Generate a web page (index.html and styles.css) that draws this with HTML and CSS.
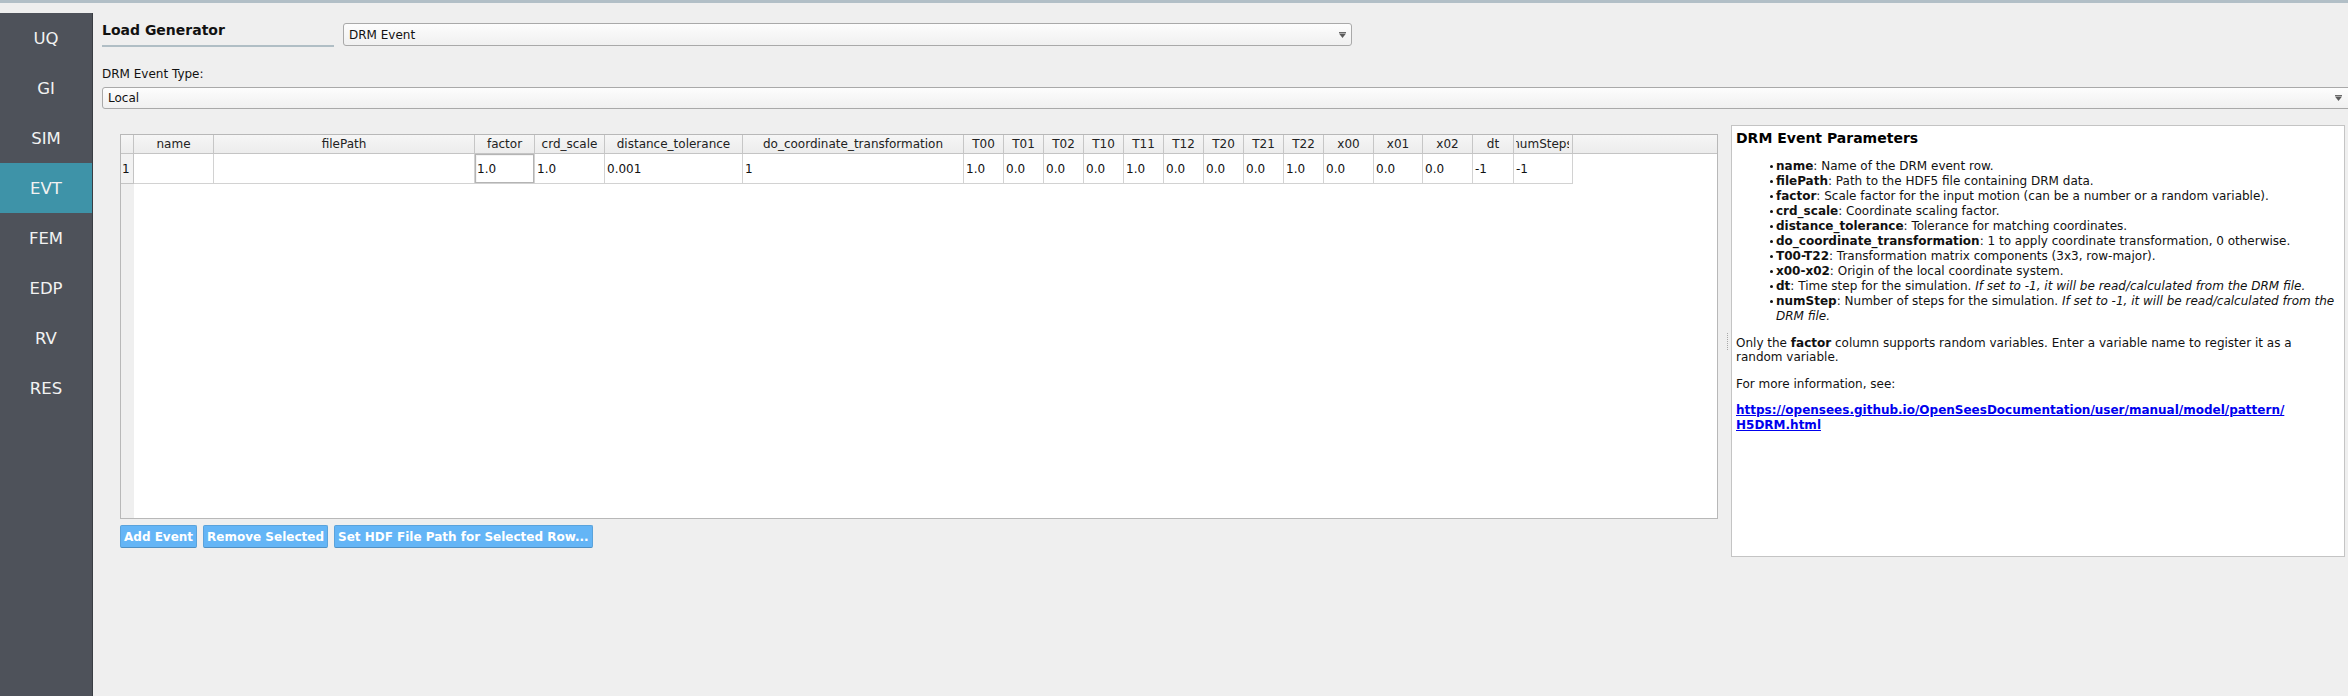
FILE: index.html
```html
<!DOCTYPE html>
<html>
<head>
<meta charset="utf-8">
<link rel="stylesheet" href="styles.css">
</head>
<body>
<div class="topline"></div>
<div class="app">
  <nav class="sidebar">
    <div class="nav-item">UQ</div>
    <div class="nav-item">GI</div>
    <div class="nav-item">SIM</div>
    <div class="nav-item active">EVT</div>
    <div class="nav-item">FEM</div>
    <div class="nav-item">EDP</div>
    <div class="nav-item">RV</div>
    <div class="nav-item">RES</div>
  </nav>
  <main class="main">
    <div class="header-row">
      <div class="title">Load Generator</div>
      <div class="combo combo-type"><span>DRM Event</span><svg class="arrow" width="7" height="6" viewBox="0 0 7 6"><rect x="0" y="0" width="7" height="1" fill="#6a6a6a"/><polygon points="0,1.5 7,1.5 3.5,6" fill="#5a5a5a"/></svg></div>
    </div>
    <div class="label">DRM Event Type:</div>
    <div class="combo combo-local"><span>Local</span><svg class="arrow" width="7" height="6" viewBox="0 0 7 6"><rect x="0" y="0" width="7" height="1" fill="#6a6a6a"/><polygon points="0,1.5 7,1.5 3.5,6" fill="#5a5a5a"/></svg></div>
    <div class="content">
      <div class="left">
        <div class="table-frame">
          <div class="vhead">
            <div class="corner"></div>
            <div class="rownum">1</div>
          </div>
          <div class="grid">
            <div class="hc">name</div>
            <div class="hc">filePath</div>
            <div class="hc">factor</div>
            <div class="hc">crd_scale</div>
            <div class="hc">distance_tolerance</div>
            <div class="hc">do_coordinate_transformation</div>
            <div class="hc">T00</div>
            <div class="hc">T01</div>
            <div class="hc">T02</div>
            <div class="hc">T10</div>
            <div class="hc">T11</div>
            <div class="hc">T12</div>
            <div class="hc">T20</div>
            <div class="hc">T21</div>
            <div class="hc">T22</div>
            <div class="hc">x00</div>
            <div class="hc">x01</div>
            <div class="hc">x02</div>
            <div class="hc">dt</div>
            <div class="hc padded"><span class="clip">numSteps</span></div>
            <div class="hc fill"></div>

            <div class="dc"></div>
            <div class="dc"></div>
            <div class="dc editor">1.0</div>
            <div class="dc">1.0</div>
            <div class="dc">0.001</div>
            <div class="dc">1</div>
            <div class="dc">1.0</div>
            <div class="dc">0.0</div>
            <div class="dc">0.0</div>
            <div class="dc">0.0</div>
            <div class="dc">1.0</div>
            <div class="dc">0.0</div>
            <div class="dc">0.0</div>
            <div class="dc">0.0</div>
            <div class="dc">1.0</div>
            <div class="dc">0.0</div>
            <div class="dc">0.0</div>
            <div class="dc">0.0</div>
            <div class="dc">-1</div>
            <div class="dc">-1</div>
            <div class="dc fill"></div>
          </div>
        </div>
        <div class="buttons">
          <button class="btn">Add Event</button>
          <button class="btn">Remove Selected</button>
          <button class="btn">Set HDF File Path for Selected Row...</button>
        </div>
      </div>
      <div class="splitter"><span class="grip"></span></div>
      <div class="info">
        <h3 class="info-title">DRM Event Parameters</h3>
        <ul class="info-list">
          <li><b>name</b>: Name of the DRM event row.</li>
          <li><b>filePath</b>: Path to the HDF5 file containing DRM data.</li>
          <li><b>factor</b>: Scale factor for the input motion (can be a number or a random variable).</li>
          <li><b>crd_scale</b>: Coordinate scaling factor.</li>
          <li><b>distance_tolerance</b>: Tolerance for matching coordinates.</li>
          <li><b>do_coordinate_transformation</b>: 1 to apply coordinate transformation, 0 otherwise.</li>
          <li><b>T00-T22</b>: Transformation matrix components (3x3, row-major).</li>
          <li><b>x00-x02</b>: Origin of the local coordinate system.</li>
          <li><b>dt</b>: Time step for the simulation. <i>If set to -1, it will be read/calculated from the DRM file.</i></li>
          <li><b>numStep</b>: Number of steps for the simulation. <i>If set to -1, it will be read/calculated from the DRM file.</i></li>
        </ul>
        <p class="info-p">Only the <b>factor</b> column supports random variables. Enter a variable name to register it as a random variable.</p>
        <p class="info-p more">For more information, see:</p>
        <p class="info-p link-p"><a class="link" href="#">https://opensees.github.io/OpenSeesDocumentation/user/manual/model/pattern/<br>H5DRM.html</a></p>
      </div>
    </div>
  </main>
</div>
</body>
</html>
```

FILE: styles.css
```css
* { box-sizing: border-box; }

html, body {
  margin: 0;
  padding: 0;
  width: 2348px;
  height: 696px;
  overflow: hidden;
  background: #efefef;
  font-family: "DejaVu Sans", "Liberation Sans", sans-serif;
  color: #111;
}

.topline {
  height: 3px;
  background: #b2bfc7;
}

.app {
  display: flex;
  height: 693px;
}

.sidebar {
  width: 93px;
  margin-top: 10px;
  background: #4e525a;
  border-right: 1px solid #3a3d43;
  flex: none;
}

.nav-item {
  height: 50px;
  display: flex;
  align-items: center;
  justify-content: center;
  color: #f2f2f2;
  font-size: 16.5px;
}

.nav-item.active {
  background: #3e93a8;
}

.main {
  flex: 1;
  min-width: 0;
  padding: 19px 0 0 9px;
  overflow: hidden;
}

.header-row {
  display: flex;
  align-items: flex-start;
}

.title {
  width: 232px;
  font-weight: bold;
  font-size: 14px;
  line-height: 16px;
  padding-bottom: 7px;
  border-bottom: 2px solid #b0bec5;
  color: #111;
}

.combo {
  display: flex;
  align-items: center;
  justify-content: space-between;
  background: linear-gradient(#fdfdfd, #f0f0f0);
  border: 1px solid #a9a9a9;
  border-radius: 3px;
  font-size: 12px;
  color: #111;
  padding: 0 5px 0 5px;
}

.combo-type {
  width: 1009px;
  height: 23px;
  margin-left: 9px;
  margin-top: 1px;
}

.label {
  margin-top: 20px;
  font-size: 12px;
  line-height: 14px;
}

.combo-local {
  width: calc(100% + 4px);
  height: 22px;
  margin-top: 6px;
  padding-right: 9px;
}

.arrow { flex: none; }

.content {
  display: flex;
  align-items: stretch;
  margin-top: 16px;
}

.left {
  padding: 9px 0 0 18px;
}

.table-frame {
  width: 1598px;
  height: 385px;
  border: 1px solid #b8b8b8;
  background: #fff;
  display: flex;
}

.vhead {
  width: 13px;
  flex: none;
  background: #efefef;
}

.corner {
  height: 19px;
  border-bottom: 1px solid #c4c4c4;
  border-right: 1px solid #c4c4c4;
  background: linear-gradient(#f6f6f6, #ececec);
}

.rownum {
  height: 30px;
  border-bottom: 1px solid #c4c4c4;
  border-right: 1px solid #c4c4c4;
  font-size: 12px;
  display: flex;
  align-items: center;
  padding-left: 1px;
  background: #f2f2f2;
}

.grid {
  flex: 1;
  display: grid;
  grid-template-columns: 80px 261px 60px 70px 138px 221px repeat(9, 40px) 50px 49px 50px 41px 59px 1fr;
  grid-template-rows: 19px 30px;
  align-content: start;
  font-size: 12px;
}

.hc {
  background: linear-gradient(#f6f6f6, #ececec);
  border-right: 1px solid #c6c6c6;
  border-bottom: 1px solid #c4c4c4;
  display: flex;
  align-items: center;
  justify-content: center;
  white-space: nowrap;
  overflow: hidden;
  color: #222;
}

.hc.padded {
  padding: 0 3px 0 2px;
}

.clip {
  display: flex;
  justify-content: center;
  width: 100%;
  overflow: hidden;
  white-space: nowrap;
}

.hc.fill {
  border-right: none;
}

.dc {
  border-right: 1px solid #d2d2d2;
  border-bottom: 1px solid #d2d2d2;
  display: flex;
  align-items: center;
  padding-left: 2px;
  white-space: nowrap;
  overflow: hidden;
  color: #111;
}

.dc.editor {
  box-shadow: inset 0 0 0 1px #b4b4b4, inset 1px 1px 0 1px #f4f4f4;
  padding-left: 2px;
}

.dc.fill {
  border: none;
}

.buttons {
  display: flex;
  gap: 6px;
  margin-top: 6px;
}

.btn {
  height: 23px;
  padding: 0 3px;
  margin: 0;
  background: #64b5f6;
  border: 1px solid #5aa3dc;
  border-bottom-color: #4f8fc2;
  border-radius: 2px;
  color: #fff;
  font-family: "DejaVu Sans", "Liberation Sans", sans-serif;
  font-weight: bold;
  font-size: 12px;
  white-space: nowrap;
}

.splitter {
  width: 13px;
  flex: none;
  display: flex;
  align-items: center;
  padding-left: 9px;
}

.grip {
  display: block;
  height: 17px;
  border-left: 1px dotted #a8a8a8;
}

.info {
  width: 614px;
  height: 432px;
  flex: none;
  background: #fff;
  border: 1px solid #c4c4c4;
  padding: 4px 4px 0 4px;
  font-size: 12px;
  color: #111;
}

.info-title {
  margin: 0;
  font-size: 14px;
  line-height: 17px;
  font-weight: bold;
  color: #000;
}

.info-list {
  margin: 12px 0 0 0;
  padding-left: 40px;
  list-style: none;
}

.info-list li {
  line-height: 15px;
}

.info-list li::before {
  content: "";
  display: inline-block;
  width: 3px;
  height: 3px;
  border-radius: 50%;
  background: #111;
  margin-left: -6px;
  margin-right: 3px;
  vertical-align: middle;
}

.info-p {
  margin: 12px 0 0 0;
  line-height: 14px;
}

.info-p.more {
  margin-top: 13px;
}

.link {
  color: #0000ee;
  font-weight: bold;
  text-decoration: underline;
  line-height: 14.5px;
}
```
